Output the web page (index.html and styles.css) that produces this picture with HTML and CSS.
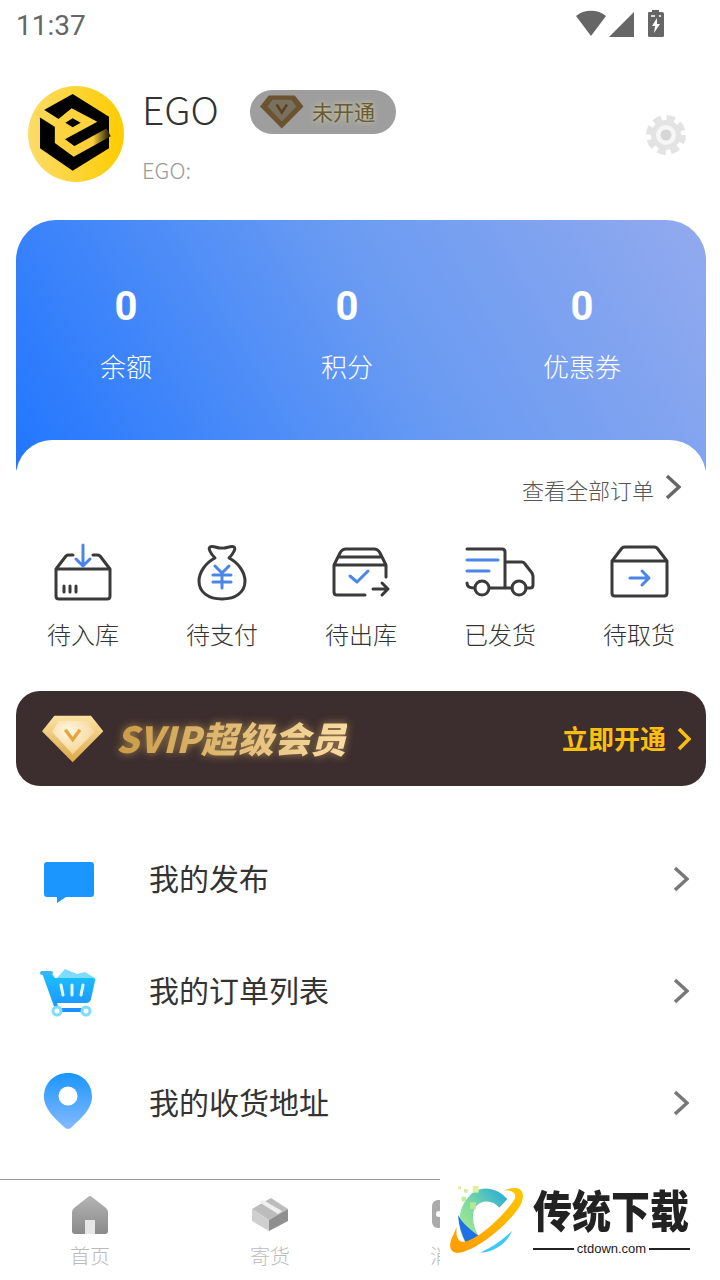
FILE: index.html
```html
<!DOCTYPE html>
<html lang="zh-CN">
<head>
<meta charset="UTF-8">
<meta name="viewport" content="width=device-width, initial-scale=1.0">
<title>EGO</title>
<link rel="stylesheet" href="styles.css">
</head>
<body>
<div class="page">

  <div class="status-bar">
    <span class="status-time">11:37</span>
    <div class="status-icons">
      <svg width="92" height="30" viewBox="0 0 92 30">
        <path d="M0 8 C8 1 22 1 30 8 L15 28 Z" fill="#666"/>
        <path d="M33 29 L58 4 V29 Z" fill="#666"/>
        <path d="M72 5 Q72 4 73 4 H76 V2 H83 V4 H86 Q88 4 88 6 V28 Q88 29 86 29 H74 Q72 29 72 28 Z" fill="#666"/>
        <path d="M81 10 L76 18 H79 L78 25 L84 16 H81 Z" fill="#fff"/>
        <path d="M75 7 H79 V9 H75 Z M83 7 H85 V9 H83 Z" fill="#ddd"/>
      </svg>
    </div>
  </div>

  <div class="profile">
    <svg class="avatar" width="96" height="96" viewBox="24 18 288 288">
      <defs>
        <linearGradient id="avatarBg" x1="0" y1="0" x2="1" y2="0">
          <stop offset="0" stop-color="#fbdc69"/>
          <stop offset="1" stop-color="#ffcc00"/>
        </linearGradient>
        <linearGradient id="avatarBand" x1="0" y1="0" x2="1" y2="0">
          <stop offset="0" stop-color="#fcd23e"/>
          <stop offset=".68" stop-color="#fdcf3a"/>
          <stop offset="1" stop-color="#2a2410"/>
        </linearGradient>
      </defs>
      <circle cx="168" cy="162" r="144" fill="url(#avatarBg)"/>
      <path d="M158 42 L267 110 V205 L158 272 L60 205 V115 L72 90 Z" fill="#000"/>
      <path d="M52 92 L118 134" fill="none" stroke="#fbd750" stroke-width="26"/>
      <path d="M118 130 V182 L162 214 L266 157" fill="none" stroke="url(#avatarBand)" stroke-width="27"/>
      <path d="M105 125 L155 85 L232 125 L135 178 L105 165 Z" fill="#fcd23e"/>
      <path d="M158 115 L182 128 L158 142 L136 128 Z" fill="#000"/>
    </svg>
    <div class="profile-info">
      <div class="profile-top">
        <span class="profile-name">EGO</span>
        <div class="vip-badge">
          <svg width="44" height="36" viewBox="38 48 186 144">
            <path d="M38 97 L75 50 H185 L222 97 L130 190 Z" fill="#6b5330"/>
            <path d="M70 97 L90 68 H170 L192 97 L130 160 Z" fill="#7a7060"/>
            <path d="M108 88 L130 122 L152 88" fill="none" stroke="#5a431c" stroke-width="11"/>
          </svg>
          <span class="vip-badge-text">未开通</span>
        </div>
      </div>
      <div class="profile-sub">EGO:</div>
    </div>
    <svg class="gear" width="40" height="40" viewBox="0 0 40 40">
      <circle cx="20" cy="20" r="15" fill="#e3e3e3"/>
      <circle cx="20" cy="20" r="16.5" fill="none" stroke="#e3e3e3" stroke-width="7" stroke-dasharray="8 4.96"/>
      <circle cx="20" cy="20" r="10" fill="#f6f6f6"/>
      <circle cx="20" cy="20" r="5.5" fill="#d6d6d6"/>
    </svg>
  </div>

  <div class="assets">
    <div class="asset"><div class="asset-num">0</div><div class="asset-label">余额</div></div>
    <div class="asset"><div class="asset-num">0</div><div class="asset-label">积分</div></div>
    <div class="asset"><div class="asset-num">0</div><div class="asset-label">优惠券</div></div>
  </div>

  <div class="orders">
    <div class="orders-head">
      <span>查看全部订单</span>
      <svg width="16" height="26" viewBox="0 0 16 26"><path d="M2 2 L14 13 L2 24" fill="none" stroke="#666" stroke-width="3.5"/></svg>
    </div>
    <div class="orders-row">
      <div class="order-item">
        <svg width="70" height="70" viewBox="0 0 70 70" class="line-icon">
          <path d="M8 29 H62 V56 Q62 59 59 59 H11 Q8 59 8 56 Z M8 29 L18 16 Q19 15 21 15 H25 M45 15 H49 Q51 15 52 16 L62 29"/>
          <path d="M16 46 V52 M22 46 V52 M28 46 V52"/>
          <path class="blue" d="M35 5 V26 M28 19 L35 26 L42 19"/>
        </svg>
        <span>待入库</span>
      </div>
      <div class="order-item">
        <svg width="70" height="70" viewBox="0 0 70 70" class="line-icon">
          <path d="M28 18 C23 13 21 8 23 7 C26 5 31 9 35 8 C39 9 44 5 47 7 C49 8 47 13 42 18 C52 23 58 33 58 41 C58 52 49 59 35 59 C21 59 12 52 12 41 C12 33 18 23 28 18 Z"/>
          <path class="blue" d="M28 26 L35 33 L42 26 M26 35 H44 M26 42 H44 M35 33 V48"/>
        </svg>
        <span>待支付</span>
      </div>
      <div class="order-item">
        <svg width="70" height="70" viewBox="0 0 70 70" class="line-icon">
          <path d="M8 25 V52 Q8 55 11 55 H39 M60 25 V37 M8 25 H60 M8 25 L14 13 Q16 9 20 9 H48 Q52 9 54 13 L60 25 M12 17 H56"/>
          <path d="M47 49 H62 M56 43 L62 49 L56 55"/>
          <path class="blue" d="M24 36 L31 42 L42 31"/>
        </svg>
        <span>待出库</span>
      </div>
      <div class="order-item">
        <svg width="70" height="70" viewBox="0 0 70 70" class="line-icon">
          <path d="M2 9 H37 Q40 9 40 12 V48 M40 22 H57 Q59 22 60 24 L67 33 Q68 35 68 37 V45 Q68 48 65 48 H61 M25 48 H47 M2 43 Q2 48 9 48"/>
          <circle cx="17" cy="48" r="7"/>
          <circle cx="54" cy="48" r="7"/>
          <path class="blue" d="M2 20 H33 M2 31 H24"/>
        </svg>
        <span>已发货</span>
      </div>
      <div class="order-item">
        <svg width="70" height="70" viewBox="0 0 70 70" class="line-icon">
          <path d="M8 21 H63 V53 Q63 56 60 56 H11 Q8 56 8 53 Z M8 21 L18 8 Q19 7 21 7 H50 Q52 7 53 8 L63 21"/>
          <path class="blue" d="M26 38 H45 M38 31 L45 38 L38 45"/>
        </svg>
        <span>待取货</span>
      </div>
    </div>
  </div>

  <div class="svip">
    <svg class="svip-gem" width="62" height="48" viewBox="38 48 186 144">
      <defs>
        <linearGradient id="gemOuter" x1="0" y1="0" x2="0" y2="1">
          <stop offset="0" stop-color="#fbe2a4"/>
          <stop offset="1" stop-color="#dba848"/>
        </linearGradient>
        <radialGradient id="gemInner" cx=".4" cy=".3" r=".8">
          <stop offset="0" stop-color="#fff6e2"/>
          <stop offset="1" stop-color="#f4cf85"/>
        </radialGradient>
      </defs>
      <path d="M38 97 L75 50 H185 L222 97 L130 190 Z" fill="url(#gemOuter)"/>
      <path d="M68 98 L88 66 H172 L196 98 L130 166 Z" fill="url(#gemInner)"/>
      <path d="M108 92 L130 122 L152 92" fill="none" stroke="#e8a43c" stroke-width="10"/>
    </svg>
    <span class="svip-title">SVIP超级会员</span>
    <span class="svip-open">立即开通</span>
    <svg width="14" height="24" viewBox="0 0 14 24"><path d="M2 2 L12 12 L2 22" fill="none" stroke="#fdbf0d" stroke-width="3.5"/></svg>
  </div>

  <div class="menu">
    <div class="menu-row">
      <svg width="60" height="60" viewBox="0 0 60 60">
        <path d="M8 13 H52 Q55 13 55 16 V45 Q55 48 52 48 H27 L18 54 V48 H8 Q5 48 5 45 V16 Q5 13 8 13 Z" fill="#1b96ff"/>
      </svg>
      <span>我的发布</span>
      <svg class="menu-arrow" width="16" height="26" viewBox="0 0 16 26"><path d="M2 2 L14 13 L2 24" fill="none" stroke="#777" stroke-width="3.5"/></svg>
    </div>
    <div class="menu-row">
      <svg width="60" height="60" viewBox="0 0 60 60">
        <defs>
          <linearGradient id="cartFill" x1="0" y1="0" x2="0" y2="1">
            <stop offset="0" stop-color="#1bc2ff"/>
            <stop offset="1" stop-color="#1b8fff"/>
          </linearGradient>
        </defs>
        <path d="M18 17 L26 8 L38 13 L46 11 L56 17 Z" fill="#7ddcff"/>
        <path d="M3 12 H12 L16 17 H54 Q57 17 56 20 L52 38 Q51 42 47 42 H18 L20 47 H46 V51 H17 Z" fill="url(#cartFill)"/>
        <path d="M3 12 H12" stroke="#3bb5ff" stroke-width="4" stroke-linecap="round"/>
        <path d="M22 24 L24 34 M33 24 V34 M44 24 L42 34" stroke="#e9f8ff" stroke-width="3" stroke-linecap="round"/>
        <circle cx="18" cy="50" r="4" fill="#fff" stroke="#7ddcff" stroke-width="3"/>
        <circle cx="47" cy="50" r="4" fill="#fff" stroke="#7ddcff" stroke-width="3"/>
      </svg>
      <span>我的订单列表</span>
      <svg class="menu-arrow" width="16" height="26" viewBox="0 0 16 26"><path d="M2 2 L14 13 L2 24" fill="none" stroke="#777" stroke-width="3.5"/></svg>
    </div>
    <div class="menu-row">
      <svg width="60" height="60" viewBox="0 0 60 60">
        <defs>
          <linearGradient id="pinFill" x1="0" y1="0" x2="0" y2="1">
            <stop offset="0" stop-color="#1b96ff"/>
            <stop offset="1" stop-color="#84b9ff"/>
          </linearGradient>
        </defs>
        <path d="M29 0 C43 0 53 10 53 24 C53 37 39 48 33 54 Q29 58 25 54 C19 48 5 37 5 24 C5 10 15 0 29 0 Z" fill="url(#pinFill)"/>
        <circle cx="29" cy="23" r="9.5" fill="#fff"/>
      </svg>
      <span>我的收货地址</span>
      <svg class="menu-arrow" width="16" height="26" viewBox="0 0 16 26"><path d="M2 2 L14 13 L2 24" fill="none" stroke="#777" stroke-width="3.5"/></svg>
    </div>
  </div>

  <div class="tabbar">
    <div class="tab">
      <svg width="40" height="40" viewBox="0 0 40 40">
        <defs>
          <linearGradient id="tabGray" x1="0" y1="0" x2="0" y2="1">
            <stop offset="0" stop-color="#b4b4b4"/>
            <stop offset="1" stop-color="#8a8a8a"/>
          </linearGradient>
        </defs>
        <path d="M20 0 Q21 0 22 1 L36 12 Q38 14 38 16 V35 Q38 38 35 38 H5 Q2 38 2 35 V16 Q2 14 4 12 L18 1 Q19 0 20 0 Z" fill="url(#tabGray)"/>
        <rect x="15" y="24" width="10" height="14" fill="#e6e6e6"/>
      </svg>
      <span>首页</span>
    </div>
    <div class="tab">
      <svg width="40" height="40" viewBox="0 0 40 40">
        <path d="M2 13 L21 2 L38 13 L19 24 Z" fill="#bcbcbc"/>
        <path d="M2 13 L19 24 V35 L2 25 Z" fill="#cfcfcf"/>
        <path d="M19 24 L38 13 V25 L19 35 Z" fill="#8f8f8f"/>
        <path d="M9 6 L28 18 L32 15 L13 4 Z" fill="#efefef"/>
      </svg>
      <span>寄货</span>
    </div>
    <div class="tab">
      <svg width="40" height="40" viewBox="0 0 40 40">
        <rect x="2" y="4" width="36" height="28" rx="6" fill="#aaa"/>
        <circle cx="9" cy="18" r="3" fill="#fff"/>
      </svg>
      <span>消息</span>
    </div>
  </div>

  <div class="watermark">
    <svg width="100" height="90" viewBox="0 0 300 270">
      <defs>
        <linearGradient id="wmShield" x1="0" y1="1" x2="1" y2="0">
          <stop offset="0" stop-color="#b6ea8c"/>
          <stop offset=".45" stop-color="#7fdca0"/>
          <stop offset="1" stop-color="#1ea6e2"/>
        </linearGradient>
        <linearGradient id="wmRing" x1="0" y1="1" x2="1" y2="0">
          <stop offset="0" stop-color="#ff9a00"/>
          <stop offset="1" stop-color="#ffc800"/>
        </linearGradient>
      </defs>
      <path d="M100 52 C130 32 170 38 202 72 L178 98 C160 78 130 72 110 92 C92 112 98 150 115 182 L78 205 C48 160 50 92 100 52 Z" fill="url(#wmShield)"/>
      <path d="M54 120 C56 150 64 175 78 205 L115 182 C100 170 70 150 54 120 Z" fill="#1f6fe8"/>
      <path d="M190 47 C230 30 258 38 246 80 C226 130 120 222 60 233 C30 238 22 212 40 180 L50 155 C46 195 60 206 82 198 C130 184 208 102 224 72 C232 55 215 43 190 47 Z" fill="url(#wmRing)"/>
      <path d="M216 168 C204 200 165 232 120 233 C160 216 190 192 216 168 Z" fill="#3cc8f8"/>
      <rect x="98" y="33" width="18" height="20" fill="#dcf0a0"/>
      <rect x="54" y="33" width="9" height="10" fill="#e4f2a8"/>
      <rect x="72" y="42" width="11" height="11" fill="#cdeea0"/>
      <rect x="65" y="65" width="13" height="15" fill="#c4eca0"/>
      <rect x="90" y="82" width="18" height="20" fill="#b4e890"/>
    </svg>
    <div class="wm-brand">
      <div class="wm-name">传统下载</div>
      <div class="wm-url"><i></i><span>ctdown.com</span><i></i></div>
    </div>
  </div>

</div>
</body>
</html>
```

FILE: styles.css
```css
body {
  margin: 0;
  font-family: "Noto Sans CJK SC", "Noto Sans", sans-serif;
  background: #fff;
}
.page {
  position: relative;
  width: 720px;
  height: 1280px;
  overflow: hidden;
  background: #fff;
}

/* status bar */
.status-bar {
  display: flex;
  align-items: center;
  justify-content: space-between;
  height: 50px;
  padding: 0 52px 0 16px;
}
.status-time {
  font-family: Roboto, sans-serif;
  font-size: 28px;
  color: #666;
}
.status-icons {
  display: flex;
  margin-bottom: 4px;
}

/* profile */
.profile {
  display: flex;
  align-items: flex-start;
  height: 170px;
  box-sizing: border-box;
  padding: 36px 34px 0 28px;
}
.avatar {
  flex: none;
}
.profile-info {
  margin: 2px 0 0 18px;
}
.profile-top {
  display: flex;
  align-items: center;
  height: 48px;
}
.profile-name {
  width: 108px;
  padding-bottom: 8px;
  font-size: 39px;
  font-weight: 300;
  line-height: 44px;
  color: #333;
}
.vip-badge {
  display: flex;
  align-items: center;
  width: 146px;
  height: 44px;
  box-sizing: border-box;
  padding-left: 10px;
  border-radius: 22px;
  background: #9e9e9e;
}
.vip-badge-text {
  margin-left: 8px;
  padding-bottom: 2px;
  font-size: 21px;
  color: #675b3c;
  text-shadow: 0 0 5px #dfd6a0;
}
.profile-sub {
  margin-top: 18px;
  font-size: 22px;
  font-weight: 300;
  line-height: 30px;
  color: #999;
}
.gear {
  margin: 29px 0 0 auto;
}

/* blue assets card */
.assets {
  display: grid;
  grid-template-columns: 220px 222px 248px;
  height: 250px;
  box-sizing: border-box;
  margin: 0 14px 0 16px;
  padding-top: 62px;
  border-radius: 40px 40px 0 0;
  background: linear-gradient(240deg, #92aaee 0%, #6a9bf2 45%, #2176ff 100%);
  text-align: center;
  color: #fff;
}
.asset-num {
  font-family: Roboto, sans-serif;
  font-size: 40px;
  font-weight: 700;
  line-height: 50px;
}
.asset-label {
  margin-top: 16px;
  font-size: 26px;
  font-weight: 300;
  line-height: 36px;
}

/* orders */
.orders {
  margin: -30px 14px 0 16px;
  height: 212px;
  box-sizing: border-box;
  padding-top: 36px;
  border-radius: 36px 36px 0 0;
  background: #fff;
}
.orders-head {
  display: flex;
  align-items: center;
  justify-content: flex-end;
  gap: 11px;
  height: 30px;
  padding-right: 25px;
  font-size: 22px;
  font-weight: 300;
  color: #555;
}
.orders-head span {
  padding-bottom: 4px;
}
.orders-head svg {
  margin-top: -8px;
}
.orders-row {
  display: grid;
  grid-template-columns: repeat(5, 139px);
  justify-content: center;
  margin-top: 34px;
}
.order-item {
  display: flex;
  flex-direction: column;
  align-items: center;
  gap: 8px;
  font-size: 24px;
  font-weight: 300;
  line-height: 32px;
  color: #333;
}
.line-icon {
  fill: none;
  stroke: #3a3a3a;
  stroke-width: 3;
  stroke-linecap: round;
  stroke-linejoin: round;
}
.line-icon .blue {
  stroke: #4a86e8;
}

/* svip banner */
.svip {
  display: flex;
  align-items: center;
  height: 95px;
  box-sizing: border-box;
  margin: 39px 14px 0 16px;
  padding: 0 15px 0 26px;
  border-radius: 24px;
  background: #3c2e2e;
}
.svip-gem {
  flex: none;
}
.svip-title {
  margin-left: 12px;
  padding-bottom: 4px;
  font-size: 36px;
  font-weight: 900;
  font-style: italic;
  letter-spacing: .4px;
  white-space: nowrap;
  background: linear-gradient(90deg, #c99b45 0%, #f9dca4 100%);
  -webkit-background-clip: text;
  background-clip: text;
  color: transparent;
  filter: drop-shadow(0 0 4px rgba(240, 190, 100, .6));
}
.svip-open {
  margin: 0 11px 0 auto;
  padding-bottom: 2px;
  font-size: 26px;
  font-weight: 700;
  color: #fdbf0d;
}

/* menu list */
.menu {
  margin-top: 37px;
}
.menu-row {
  display: flex;
  align-items: center;
  height: 112px;
  padding: 0 31px 0 39px;
  font-size: 30px;
  font-weight: 400;
  color: #333;
}
.menu-row span {
  margin-left: 50px;
  padding-bottom: 4px;
}
.menu-arrow {
  margin-left: auto;
}

/* tab bar */
.tabbar {
  display: grid;
  grid-template-columns: repeat(4, 180px);
  height: 101px;
  margin-top: 20px;
  padding-top: 16px;
  box-sizing: border-box;
  border-top: 1px solid #999;
}
.tab {
  display: flex;
  flex-direction: column;
  align-items: center;
  gap: 6px;
  font-size: 20px;
  font-weight: 300;
  line-height: 28px;
  color: #bbb;
}

/* download site watermark, sits on top of the tab bar */
.watermark {
  position: absolute;
  left: 440px;
  top: 1175px;
  display: flex;
  width: 280px;
  height: 105px;
  background: #fff;
}
.wm-brand {
  margin-left: -7px;
}
.wm-name {
  width: 160px;
  margin-top: 10px;
  font-size: 39px;
  font-weight: 900;
  line-height: 46px;
  white-space: nowrap;
  color: #222;
  transform: scaleY(1.15);
}
.wm-url {
  display: flex;
  align-items: center;
  gap: 3px;
  width: 157px;
  margin-top: 11px;
  font-family: "Liberation Sans", sans-serif;
  font-size: 13px;
  line-height: 14px;
  color: #222;
}
.wm-url i {
  flex: 1;
  height: 2px;
  background: #222;
}
```
